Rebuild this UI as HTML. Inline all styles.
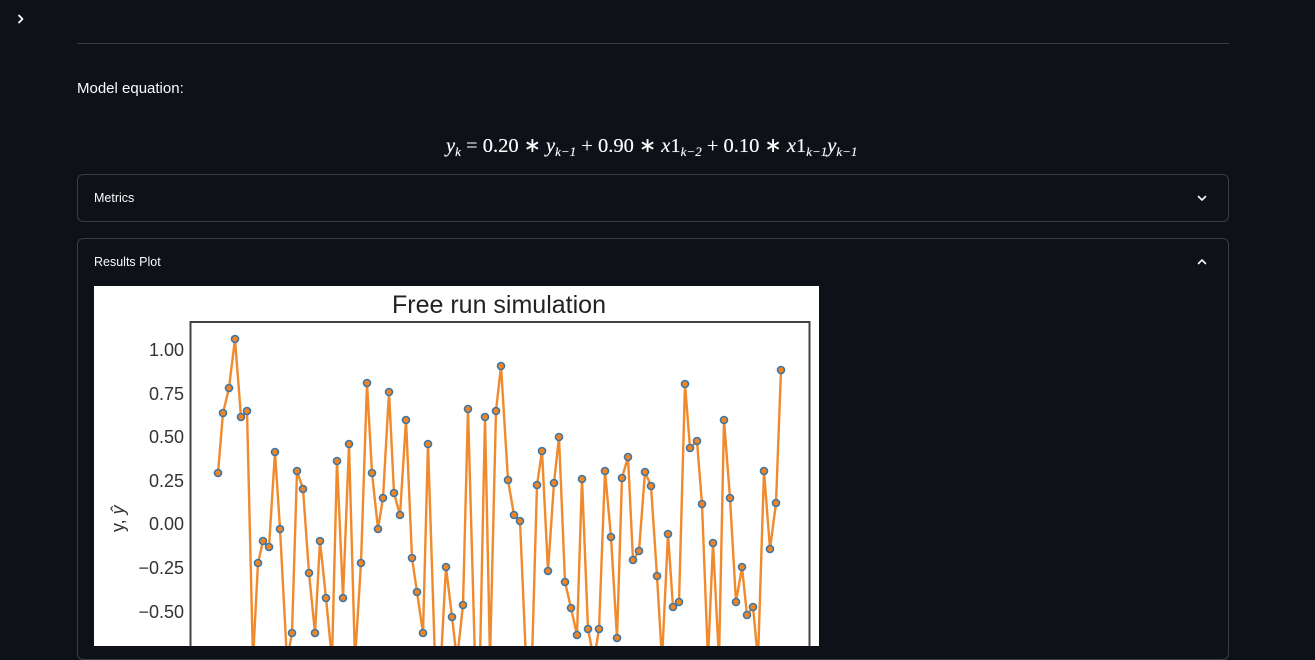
<!DOCTYPE html>
<html><head><meta charset="utf-8"><style>
html,body{margin:0;padding:0;width:1315px;height:636px;overflow:hidden;background:#0e1117;font-family:"Liberation Sans",sans-serif;color:#fafafa;}
.abs{position:absolute}
.exp{position:absolute;left:77px;width:1150px;border:1px solid #3b3d46;border-radius:6px;}
.lbl{position:absolute;left:16px;font-size:12.5px;color:#fafafa}
.eq{position:absolute;left:446px;top:133px;font-family:"Liberation Serif",serif;font-size:20.5px;white-space:nowrap;text-shadow:0 0 0.4px #fff;}
.eq i{font-style:italic}
.eq sub{font-size:13px;vertical-align:-4px;font-style:italic}
</style></head><body>
<svg class="abs" style="left:14px;top:12px" width="14" height="14" viewBox="0 0 14 14"><path d="M5 3.5 L8.5 7 L5 10.5" fill="none" stroke="#fafafa" stroke-width="1.8" stroke-linecap="round" stroke-linejoin="round"/></svg>
<div class="abs" style="left:77px;top:43px;width:1152px;height:1px;background:#3b3d46"></div>
<div class="abs" style="left:77px;top:80px;font-size:15px">Model equation:</div>
<div class="eq"><i>y</i><sub>k</sub> = 0.20 ∗ <i>y</i><sub>k−1</sub> + 0.90 ∗ <i>x</i>1<sub>k−2</sub> + 0.10 ∗ <i>x</i>1<sub>k−1</sub><i>y</i><sub>k−1</sub></div>
<div class="exp" style="top:174px;height:46px">
<div class="lbl" style="top:16px">Metrics</div>
<svg class="abs" style="right:20px;top:17px" width="12" height="12" viewBox="0 0 12 12"><path d="M2.5 4.5 L6 8 L9.5 4.5" fill="none" stroke="#fafafa" stroke-width="1.6" stroke-linecap="round" stroke-linejoin="round"/></svg>
</div>
<div class="exp" style="top:238px;height:420px">
<div class="lbl" style="top:16px">Results Plot</div>
<svg class="abs" style="right:20px;top:17px" width="12" height="12" viewBox="0 0 12 12"><path d="M2.5 7.5 L6 4 L9.5 7.5" fill="none" stroke="#fafafa" stroke-width="1.6" stroke-linecap="round" stroke-linejoin="round"/></svg>
</div>
<svg class="abs" style="left:94px;top:286px" width="725" height="360" viewBox="94 286 725 360">
<defs>
<g id="m">
<circle cx="218" cy="473" r="3.5"/><circle cx="223" cy="413" r="3.5"/><circle cx="229" cy="388" r="3.5"/><circle cx="235" cy="339" r="3.5"/><circle cx="241" cy="417" r="3.5"/><circle cx="247" cy="411" r="3.5"/><circle cx="258" cy="563" r="3.5"/><circle cx="263" cy="541" r="3.5"/><circle cx="269" cy="547" r="3.5"/><circle cx="275" cy="452" r="3.5"/><circle cx="280" cy="529" r="3.5"/><circle cx="292" cy="633" r="3.5"/><circle cx="297" cy="471" r="3.5"/><circle cx="303" cy="489" r="3.5"/><circle cx="309" cy="573" r="3.5"/><circle cx="315" cy="633" r="3.5"/><circle cx="320" cy="541" r="3.5"/><circle cx="326" cy="598" r="3.5"/><circle cx="337" cy="461" r="3.5"/><circle cx="343" cy="598" r="3.5"/><circle cx="349" cy="444" r="3.5"/><circle cx="361" cy="563" r="3.5"/><circle cx="367" cy="383" r="3.5"/><circle cx="372" cy="473" r="3.5"/><circle cx="378" cy="529" r="3.5"/><circle cx="383" cy="498" r="3.5"/><circle cx="389" cy="392" r="3.5"/><circle cx="394" cy="493" r="3.5"/><circle cx="400" cy="515" r="3.5"/><circle cx="406" cy="420" r="3.5"/><circle cx="412" cy="558" r="3.5"/><circle cx="417" cy="592" r="3.5"/><circle cx="423" cy="633" r="3.5"/><circle cx="428" cy="444" r="3.5"/><circle cx="446" cy="567" r="3.5"/><circle cx="452" cy="617" r="3.5"/><circle cx="463" cy="605" r="3.5"/><circle cx="468" cy="409" r="3.5"/><circle cx="485" cy="417" r="3.5"/><circle cx="496" cy="411" r="3.5"/><circle cx="501" cy="366" r="3.5"/><circle cx="508" cy="480" r="3.5"/><circle cx="514" cy="515" r="3.5"/><circle cx="520" cy="521" r="3.5"/><circle cx="537" cy="485" r="3.5"/><circle cx="542" cy="451" r="3.5"/><circle cx="548" cy="571" r="3.5"/><circle cx="554" cy="483" r="3.5"/><circle cx="559" cy="437" r="3.5"/><circle cx="565" cy="582" r="3.5"/><circle cx="571" cy="608" r="3.5"/><circle cx="577" cy="635" r="3.5"/><circle cx="582" cy="479" r="3.5"/><circle cx="588" cy="629" r="3.5"/><circle cx="599" cy="629" r="3.5"/><circle cx="605" cy="471" r="3.5"/><circle cx="611" cy="537" r="3.5"/><circle cx="617" cy="638" r="3.5"/><circle cx="622" cy="478" r="3.5"/><circle cx="628" cy="457" r="3.5"/><circle cx="633" cy="560" r="3.5"/><circle cx="639" cy="551" r="3.5"/><circle cx="645" cy="472" r="3.5"/><circle cx="651" cy="486" r="3.5"/><circle cx="657" cy="576" r="3.5"/><circle cx="668" cy="534" r="3.5"/><circle cx="673" cy="607" r="3.5"/><circle cx="679" cy="602" r="3.5"/><circle cx="685" cy="384" r="3.5"/><circle cx="690" cy="448" r="3.5"/><circle cx="697" cy="441" r="3.5"/><circle cx="702" cy="504" r="3.5"/><circle cx="713" cy="543" r="3.5"/><circle cx="724" cy="420" r="3.5"/><circle cx="730" cy="498" r="3.5"/><circle cx="736" cy="602" r="3.5"/><circle cx="742" cy="567" r="3.5"/><circle cx="747" cy="615" r="3.5"/><circle cx="753" cy="607" r="3.5"/><circle cx="764" cy="471" r="3.5"/><circle cx="770" cy="549" r="3.5"/><circle cx="776" cy="503" r="3.5"/><circle cx="781" cy="370" r="3.5"/>
</g>
</defs>
<rect x="94" y="286" width="725" height="360" fill="#fff"/>
<text x="499" y="313" font-size="25" text-anchor="middle" fill="#222" font-family="Liberation Sans,sans-serif">Free run simulation</text>
<rect x="190.5" y="322" width="619" height="340" fill="none" stroke="#444" stroke-width="2"/>
<g font-size="18" fill="#333" text-anchor="end" font-family="Liberation Sans,sans-serif">
<text x="184" y="356">1.00</text><text x="184" y="400">0.75</text><text x="184" y="443">0.50</text><text x="184" y="487">0.25</text><text x="184" y="530">0.00</text><text x="184" y="574">−0.25</text><text x="184" y="618">−0.50</text>
</g>
<text transform="translate(124,532) rotate(-90)" font-size="18" fill="#333" font-family="Liberation Sans,sans-serif">y, <tspan font-style="italic">ŷ</tspan></text>
<polyline fill="none" stroke="#f08a2c" stroke-width="2.4" stroke-linejoin="round" points="218,473 223,413 229,388 235,339 241,417 247,411 253,660 258,563 263,541 269,547 275,452 280,529 287,660 292,633 297,471 303,489 309,573 315,633 320,541 326,598 332,660 337,461 343,598 349,444 355,660 361,563 367,383 372,473 378,529 383,498 389,392 394,493 400,515 406,420 412,558 417,592 423,633 428,444 435,660 441,660 446,567 452,617 457,660 463,605 468,409 475,660 480,660 485,417 490,660 496,411 501,366 508,480 514,515 520,521 526,660 532,660 537,485 542,451 548,571 554,483 559,437 565,582 571,608 577,635 582,479 588,629 594,660 599,629 605,471 611,537 617,638 622,478 628,457 633,560 639,551 645,472 651,486 657,576 662,660 668,534 673,607 679,602 685,384 690,448 697,441 702,504 708,660 713,543 719,660 724,420 730,498 736,602 742,567 747,615 753,607 758,660 764,471 770,549 776,503 781,370"/>
<use href="#m" fill="#f5841f" stroke="#3a77a8" stroke-width="1.6"/>
</svg>
</body></html>
